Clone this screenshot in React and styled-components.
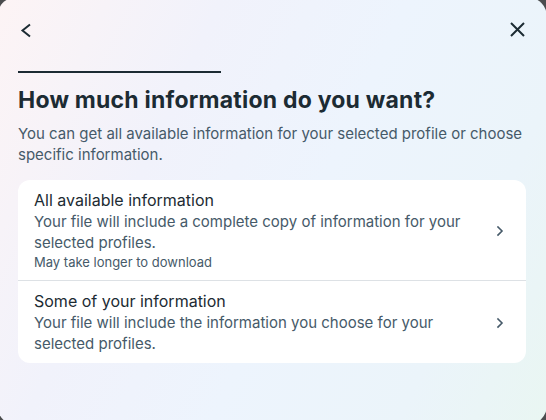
import React from 'react';
import styled, { createGlobalStyle } from 'styled-components';

const ink = '#1c2b33';
const muted = '#465a69';

const GlobalStyle = createGlobalStyle`
  html, body {
    margin: 0;
    padding: 0;
    width: 546px;
    height: 420px;
    overflow: hidden;
    background: #4b4c4e;
  }
  body {
    font-family: Inter, "Noto Sans", sans-serif;
    color: ${ink};
  }
`;

const Dialog = styled.div`
  box-sizing: border-box;
  width: 550px;
  height: 428px;
  margin: -3px 0 0 -3px;
  border-radius: 20px;
  background: linear-gradient(115deg, #fdf4f5 0%, #f1f2fb 30%, #edf4fd 55%, #ebf4fa 80%, #e9f6f2 100%);
  padding: 21px 21px 0 21px;
  display: flex;
  flex-direction: column;
`;

const TopBar = styled.div`
  display: flex;
  justify-content: space-between;
  align-items: center;
  height: 24px;
`;

const IconButton = styled.button`
  border: 0;
  background: none;
  padding: 0;
  width: 24px;
  height: 24px;
  display: flex;
  align-items: center;
  justify-content: center;
  color: ${ink};
  cursor: pointer;
`;

const Progress = styled.div`
  margin-top: 29px;
  width: 203px;
  height: 2px;
  background: ${ink};
`;

const Title = styled.h1`
  margin: 13px 0 0;
  font-size: 23px;
  line-height: 28px;
  font-weight: 700;
  color: ${ink};
  letter-spacing: 0.22px;
`;

const Intro = styled.p`
  margin: 9px 0 0;
  font-size: 15px;
  line-height: 21px;
  color: ${muted};
`;

const Card = styled.div`
  margin-top: 15px;
  background: #fff;
  border-radius: 12px;
  overflow: hidden;
`;

const Option = styled.div`
  display: flex;
  align-items: center;
  padding: 10px 18px 9px 16px;
  border-top: ${p => (p.$first ? '0' : '1px solid #dde1e5')};
  cursor: pointer;
`;

const OptionText = styled.div`
  flex: 1;
  padding-right: 18px;
`;

const OptionTitle = styled.div`
  font-size: 16px;
  line-height: 21px;
  color: ${ink};
`;

const OptionDesc = styled.div`
  font-size: 15px;
  line-height: 21px;
  color: ${muted};
`;

const OptionNote = styled.div`
  font-size: 13px;
  line-height: 18px;
  color: ${muted};
`;

const BackIcon = () => (
  <svg width="24" height="24" viewBox="0 0 24 24" fill="none" stroke="currentColor" strokeWidth="2">
    <path d="M12 6.5L4.5 12.5 12 18.5" />
  </svg>
);

const CloseIcon = () => (
  <svg width="24" height="24" viewBox="0 0 24 24" fill="none" stroke="currentColor" strokeWidth="2">
    <path d="M9 5l13 13M22 5L9 18" />
  </svg>
);

const RowChevron = () => (
  <svg width="16" height="16" viewBox="0 0 24 24" fill="none" stroke="currentColor" strokeWidth="2.4" strokeLinecap="square">
    <path d="M9 6l6 6-6 6" />
  </svg>
);

const ChevronWrap = styled.span`
  color: ${muted};
  display: flex;
`;

const options = [
  {
    title: 'All available information',
    desc: 'Your file will include a complete copy of information for your selected profiles.',
    note: 'May take longer to download',
  },
  {
    title: 'Some of your information',
    desc: 'Your file will include the information you choose for your selected profiles.',
  },
];

export default function App() {
  return (
    <>
      <GlobalStyle />
      <Dialog>
        <TopBar>
          <IconButton aria-label="Back">
            <BackIcon />
          </IconButton>
          <IconButton aria-label="Close">
            <CloseIcon />
          </IconButton>
        </TopBar>
        <Progress />
        <Title>How much information do you want?</Title>
        <Intro>
          You can get all available information for your selected profile or choose specific information.
        </Intro>
        <Card>
          {options.map((o, i) => (
            <Option key={i} $first={i === 0}>
              <OptionText>
                <OptionTitle>{o.title}</OptionTitle>
                <OptionDesc>{o.desc}</OptionDesc>
                {o.note && <OptionNote>{o.note}</OptionNote>}
              </OptionText>
              <ChevronWrap>
                <RowChevron />
              </ChevronWrap>
            </Option>
          ))}
        </Card>
      </Dialog>
    </>
  );
}
